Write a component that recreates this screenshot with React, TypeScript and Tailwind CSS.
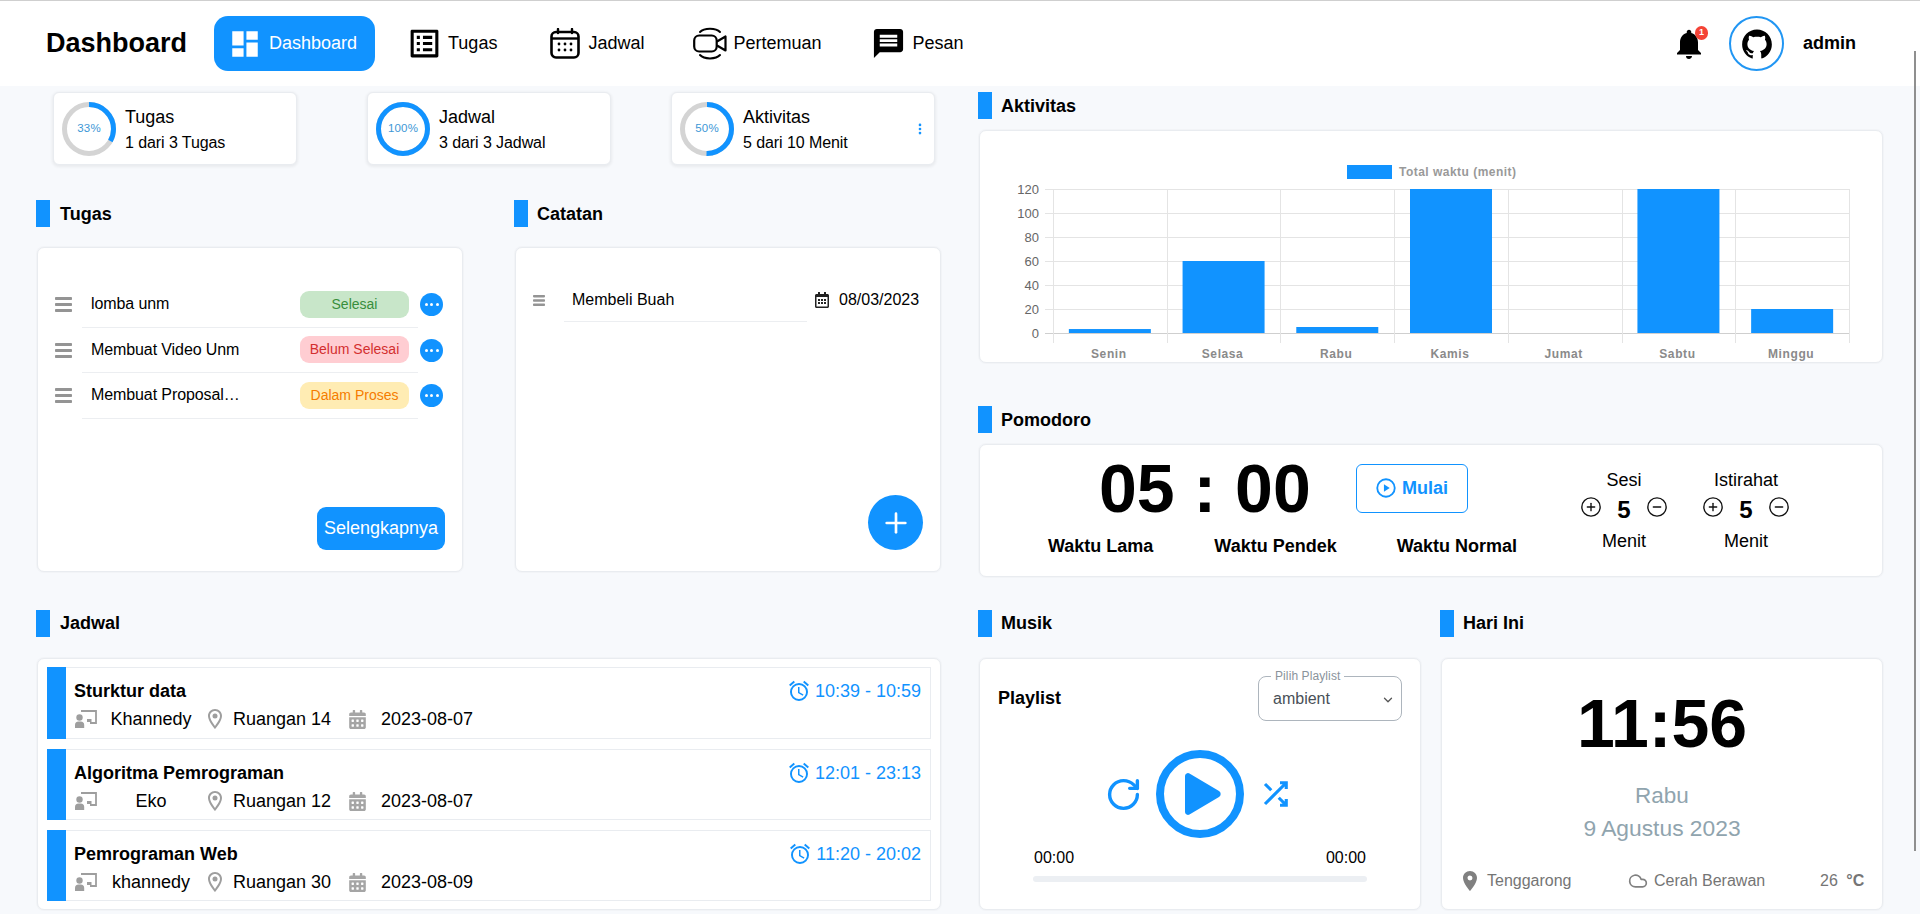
import React from "react";
import { MdDashboard, MdListAlt, MdMessage, MdNotifications, MdOutlineAlarm, MdOutlineLocationOn, MdLocationOn } from "react-icons/md";
import { AiOutlineGithub } from "react-icons/ai";
import { FaCalendarAlt, FaRegCalendarAlt } from "react-icons/fa";
import { CirclePlus, CircleMinus, RotateCw, Plus, EllipsisVertical, Cloud, ChevronDown } from "lucide-react";

const BLUE = "#1193ff";
const CARD = "bg-white rounded-[7px] border border-[#e9ecf0] shadow-[0_0_0_1px_#f2f4f7]";

function Section({ title, className = "", titleClass = "ml-[9px]", children }: { title: string; className?: string; titleClass?: string; children?: React.ReactNode }) {
  return (
    <div className={className}>
      <div className="flex items-center h-[27px]">
        <div className="w-[14px] h-[27px] bg-[#1193ff]" />
        <div className={`text-[18px] font-bold text-black ${titleClass}`}>{title}</div>
      </div>
      {children}
    </div>
  );
}

function Ring({ pct }: { pct: number }) {
  const r = 24.5;
  const c = 2 * Math.PI * r;
  return (
    <div className="relative w-[54px] h-[54px] shrink-0">
      <svg width="54" height="54" viewBox="0 0 54 54">
        <circle cx="27" cy="27" r={r} fill="none" stroke="#d4d4d4" strokeWidth="5" />
        <circle cx="27" cy="27" r={r} fill="none" stroke={BLUE} strokeWidth="5" strokeDasharray={`${(c * pct) / 100} ${c}`} transform="rotate(-90 27 27)" />
      </svg>
      <div className="absolute inset-0 flex items-center justify-center text-[11.5px] tracking-[0.2px] text-[#3d97d6]">{pct}%</div>
    </div>
  );
}

function Stat({ pct, title, sub, className, more }: { pct: number; title: string; sub: string; className: string; more?: boolean }) {
  return (
    <div className={`flex items-center h-[73px] bg-white rounded-[6px] border border-[#e9ecf0] shadow-[0_1px_3px_1px_rgba(0,0,0,0.06)] pl-[8px] ${className}`}>
      <Ring pct={pct} />
      <div className="ml-[9px] flex flex-col gap-[4px] mt-[3px] text-black">
        <div className="text-[18px] leading-[22px]">{title}</div>
        <div className="text-[16px] leading-[22px] tracking-[-0.08px]">{sub}</div>
      </div>
      {more && <EllipsisVertical size={14} strokeWidth={2.6} color={BLUE} className="ml-auto mr-[7px]" />}
    </div>
  );
}

function Burger({ w, h, bar }: { w: number; h: number; bar: number }) {
  const gap = (h - bar) / 2;
  return (
    <svg width={w} height={h} viewBox={`0 0 ${w} ${h}`} className="shrink-0">
      {[0, 1, 2].map((i) => (
        <rect key={i} x="0" y={i * gap} width={w} height={bar} rx="0.8" fill="#949494" />
      ))}
    </svg>
  );
}

function Dots() {
  return (
    <div className="w-[23px] h-[23px] rounded-full bg-[#1193ff] flex items-center justify-center gap-[2.5px] shrink-0">
      <span className="w-[3px] h-[3px] rounded-full bg-white" />
      <span className="w-[3px] h-[3px] rounded-full bg-white" />
      <span className="w-[3px] h-[3px] rounded-full bg-white" />
    </div>
  );
}

const tasks = [
  { name: "lomba unm", status: "Selesai", cls: "bg-[#c8e6c9] text-[#388e3c]" },
  { name: "Membuat Video Unm", status: "Belum Selesai", cls: "bg-[#ffcdd2] text-[#d32f2f]" },
  { name: "Membuat Proposal Skripsi", status: "Dalam Proses", cls: "bg-[#ffecb3] text-[#f57c00]" },
];

function TaskRow({ t }: { t: (typeof tasks)[number] }) {
  return (
    <div className="flex items-center h-[45.5px] pl-[17px]">
      <Burger w={17} h={15} bar={3} />
      <div className="ml-[10px] w-[336px] h-full flex items-center border-b border-[#eceef1] pl-[9px]">
        <div className="w-[152px] truncate text-[16px] tracking-[-0.1px] text-black">{t.name}</div>
        <div className={`ml-auto mr-[9px] w-[109px] h-[27px] rounded-[9px] flex items-center justify-center text-[14px] ${t.cls}`}>{t.status}</div>
      </div>
      <div className="ml-[2px]">
        <Dots />
      </div>
    </div>
  );
}

function Chart() {
  const L = 73, R = 869, T = 59, B = 203;
  const cw = (R - L) / 7;
  const days = ["Senin", "Selasa", "Rabu", "Kamis", "Jumat", "Sabtu", "Minggu"];
  const vals = [3.3, 60, 5, 120, 0, 120, 20];
  const ticks = [120, 100, 80, 60, 40, 20, 0];
  const u = (B - T) / 120;
  return (
    <svg width="903" height="231" viewBox="0 0 903 231" className="block text-[12px]">
      <rect x="367" y="34" width="45" height="14" fill={BLUE} />
      <text x="419" y="45" textLength={117} lengthAdjust="spacing" className="font-bold fill-[#999]">Total waktu (menit)</text>
      {ticks.map((t, i) => (
        <g key={t}>
          <line x1={65} x2={R} y1={T + i * 24 - 0.5} y2={T + i * 24 - 0.5} stroke={t === 0 ? "#cfcfcf" : "#e4e4e4"} />
          <text x="59" y={T + i * 24 + 4} textAnchor="end" className="text-[13px] fill-[#666]">{t}</text>
        </g>
      ))}
      {Array.from({ length: 8 }).map((_, i) => (
        <line key={i} x1={Math.round(L + i * cw) + 0.5} x2={Math.round(L + i * cw) + 0.5} y1={T - 1} y2={B + 9} stroke="#e4e4e4" />
      ))}
      {vals.map((v, i) =>
        v > 0 ? <rect key={i} x={L + i * cw + (cw - 82) / 2} y={B - 1 - v * u} width="82" height={v * u} fill={BLUE} /> : null
      )}
      {days.map((d, i) => (
        <text key={d} x={L + i * cw + cw / 2 - 1} y="227" textAnchor="middle" className="font-bold tracking-[0.6px] fill-[#8a8a8a]">{d}</text>
      ))}
    </svg>
  );
}

function Stepper({ label }: { label: string }) {
  return (
    <div className="w-[100px] flex flex-col items-center pt-[25px] text-[18px] text-black">
      <div className="leading-[20px]">{label}</div>
      <div className="flex items-center justify-between w-[88px] h-[33px]">
        <CirclePlus size={22} strokeWidth={1.5} color="#111" />
        <span className="text-[24px] leading-[24px] font-bold mt-[6px]">5</span>
        <CircleMinus size={22} strokeWidth={1.5} color="#111" />
      </div>
      <div className="leading-[20px] mt-[8px]">Menit</div>
    </div>
  );
}

const schedule = [
  { title: "Sturktur data", time: "10:39 - 10:59", who: "Khannedy", room: "Ruangan 14", date: "2023-08-07", h: "h-[72px]" },
  { title: "Algoritma Pemrograman", time: "12:01 - 23:13", who: "Eko", room: "Ruangan 12", date: "2023-08-07", h: "h-[71px]" },
  { title: "Pemrograman Web", time: "11:20 - 20:02", who: "khannedy", room: "Ruangan 30", date: "2023-08-09", h: "h-[71px]" },
];

function JadwalIcon() {
  return (
    <svg width="30" height="31" viewBox="0 0 30 31" fill="none" className="shrink-0">
      <rect x="1.5" y="4" width="27" height="25.5" rx="4.5" stroke="#000" strokeWidth="2.6" />
      <path d="M2 10.5h26" stroke="#000" strokeWidth="2.4" />
      <path d="M8 1v4M22 1v4" stroke="#000" strokeWidth="2.4" strokeLinecap="round" />
      {[9, 15, 21].map((x) => [16, 22].map((y) => <circle key={`${x}-${y}`} cx={x} cy={y} r="1.4" fill="#000" />))}
    </svg>
  );
}

function MeetIcon() {
  return (
    <svg width="34" height="33" viewBox="0 0 34 33" fill="none" className="shrink-0">
      <rect x="1.2" y="8.5" width="22.5" height="16" rx="5" stroke="#000" strokeWidth="2.2" />
      <path d="M24 14.5l8.5-5v14l-8.5-5" stroke="#000" strokeWidth="2.2" strokeLinejoin="round" />
      <path d="M7 5C11 0.5 23 0.5 27 5M7 28C11 32.5 23 32.5 27 28" stroke="#000" strokeWidth="2" strokeLinecap="round" />
    </svg>
  );
}

function TeacherIcon() {
  return (
    <svg width="22" height="18" viewBox="0 0 22 18" className="shrink-0 ml-[1px]">
      <path d="M6 1H21V13H15" fill="none" stroke="#9e9e9e" strokeWidth="1.8" />
      <circle cx="4.5" cy="7.5" r="3.2" fill="#9e9e9e" />
      <path d="M0 18v-3a3.6 3.6 0 0 1 3.6-3.6h2a3.6 3.6 0 0 1 3.6 3.6v3z" fill="#9e9e9e" />
      <rect x="12" y="9" width="4.5" height="3" fill="#9e9e9e" />
    </svg>
  );
}

function PlayIcon() {
  return (
    <svg width="20" height="20" viewBox="0 0 24 24" className="mr-[6px]">
      <circle cx="12" cy="12" r="10.5" fill="none" stroke={BLUE} strokeWidth="2.2" />
      <path d="M9.5 7.5l7 4.5-7 4.5z" fill={BLUE} />
    </svg>
  );
}

function ShuffleIcon() {
  return (
    <svg width="30" height="30" viewBox="0 0 24 24" fill="none" stroke={BLUE} strokeWidth="2.5" className="ml-[16px] mr-[5px]">
      <path d="M16 3h5v5M4 20L21 3M21 16v5h-5M15 15l6 6M4 4l5 5" />
    </svg>
  );
}

export default function App() {
  return (
    <div className="relative w-[1920px] h-[914px] overflow-hidden bg-[#f7f9fc] font-['Liberation_Sans',Arial,sans-serif] text-black">
      <header className="h-[86px] bg-white border-t border-[#cfcfcf] flex items-center">
        <div className="ml-[46px] text-[27px] font-bold">Dashboard</div>
        <div className="ml-[27px] w-[161px] h-[55px] rounded-[14px] bg-[#1193ff] flex items-center pl-[14px] text-white text-[18px]">
          <MdDashboard size={34} />
          <span className="ml-[7px]">Dashboard</span>
        </div>
        <div className="ml-[31px] flex items-center text-[18px]">
          <MdListAlt size={37} />
          <span className="ml-[5px]">Tugas</span>
        </div>
        <div className="ml-[53px] flex items-center text-[18px]">
          <JadwalIcon />
          <span className="ml-[8px]">Jadwal</span>
        </div>
        <div className="ml-[49px] flex items-center text-[18px]">
          <MeetIcon />
          <span className="ml-[6px]">Pertemuan</span>
        </div>
        <div className="ml-[50px] flex items-center text-[18px]">
          <MdMessage size={35} />
          <span className="ml-[6px]">Pesan</span>
        </div>
        <div className="ml-auto relative">
          <MdNotifications size={36} />
          <div className="absolute top-0 right-[-1px] w-[13px] h-[14px] rounded-full bg-[#f44336] text-white text-[9px] font-bold flex items-center justify-center">1</div>
        </div>
        <div className="ml-[22px] w-[55px] h-[55px] rounded-full border-2 border-[#2196f3] flex items-center justify-center">
          <AiOutlineGithub size={34} />
        </div>
        <div className="ml-[19px] mr-[64px] text-[18px] font-bold w-[53px]">admin</div>
      </header>

      <main className="flex">
        <div className="ml-[36px] w-[905px]">
          <div className="flex mt-[6px] ml-[17px]">
            <Stat pct={33} title="Tugas" sub="1 dari 3 Tugas" className="w-[244px]" />
            <Stat pct={100} title="Jadwal" sub="3 dari 3 Jadwal" className="w-[244px] ml-[70px]" />
            <Stat pct={50} title="Aktivitas" sub="5 dari 10 Menit" className="w-[264px] ml-[60px]" more />
          </div>

          <div className="flex mt-[35px]">
            <Section title="Tugas" className="w-[427px]" titleClass="ml-[10px] mt-[2px]">
              <div className={`mt-[20px] ml-[1px] h-[325px] flex flex-col ${CARD}`}>
                <div className="mt-[34px]">
                  {tasks.map((t) => (
                    <TaskRow key={t.name} t={t} />
                  ))}
                </div>
                <div className="mt-auto self-end mr-[17px] mb-[21px] w-[128px] h-[43px] rounded-[9px] bg-[#1193ff] text-white text-[18px] flex items-center justify-center">Selengkapnya</div>
              </div>
            </Section>
            <Section title="Catatan" className="w-[427px] ml-[51px]" titleClass="ml-[9px] mt-[2px]">
              <div className={`mt-[20px] ml-[1px] h-[325px] flex flex-col ${CARD}`}>
                <div className="mt-[30px] h-[44px] flex items-center pl-[17px]">
                  <Burger w={12} h={11} bar={2.4} />
                  <div className="ml-[19px] w-[243px] h-full border-b border-[#eceef1] flex items-center pl-[8px] text-[16px]">Membeli Buah</div>
                  <FaRegCalendarAlt size={16} color="#222" className="ml-[7px]" />
                  <span className="ml-[9px] text-[16px]">08/03/2023</span>
                </div>
                <div className="mt-auto self-end mr-[17px] mb-[21px] w-[55px] h-[55px] rounded-full bg-[#1193ff] flex items-center justify-center">
                  <Plus size={32} color="#fff" strokeWidth={2} />
                </div>
              </div>
            </Section>
          </div>

          <Section title="Jadwal" className="mt-[38px]" titleClass="ml-[10px]">
            <div className={`mt-[21px] ml-[1px] h-[252px] px-[9px] pt-[8px] flex flex-col gap-[10px] ${CARD}`}>
              {schedule.map((s) => (
                <div key={s.title} className={`${s.h} flex border border-[#e9ecf0]`}>
                  <div className="w-[19px] -ml-px -my-px bg-[#1193ff] shrink-0" />
                  <div className="flex-1 pl-[8px] pr-[9px] pt-[13px]">
                    <div className="flex items-center justify-between h-[20px]">
                      <div className="text-[18px] font-bold">{s.title}</div>
                      <div className="flex items-center text-[18px] text-[#1193ff]">
                        <MdOutlineAlarm size={24} className="mr-[4px]" />
                        {s.time}
                      </div>
                    </div>
                    <div className="flex items-center h-[20px] mt-[8px] text-[18px] whitespace-nowrap">
                      <TeacherIcon />
                      <div className="ml-[13px] w-[82px] text-center">{s.who}</div>
                      <MdOutlineLocationOn size={24} color="#9e9e9e" className="ml-[11px]" />
                      <div className="ml-[6px] w-[98px]">{s.room}</div>
                      <FaCalendarAlt size={19} color="#a5a5a5" className="ml-[17px]" />
                      <div className="ml-[14px]">{s.date}</div>
                    </div>
                  </div>
                </div>
              ))}
            </div>
          </Section>
        </div>

        <div className="ml-[37px] w-[905px]">
          <Section title="Aktivitas" className="mt-[6px]" titleClass="ml-[9px] mt-[1px]">
            <div className={`mt-[11px] ml-[1px] h-[233px] ${CARD}`}>
              <Chart />
            </div>
          </Section>

          <Section title="Pomodoro" className="mt-[43px]" titleClass="ml-[9px] mt-[2px]">
            <div className={`mt-[11px] ml-[1px] h-[133px] flex ${CARD}`}>
              <div className="w-[594px] pt-[8px]">
                <div className="flex items-center ml-[119px] h-[70px]">
                  <div className="w-[257px] text-[68px] leading-[70px] font-bold">05 : 00</div>
                  <div className="w-[112px] h-[49px] border-[1.5px] border-[#1193ff] rounded-[6px] flex items-center justify-center text-[#1193ff] text-[18px] font-bold">
                    <PlayIcon />
                    Mulai
                  </div>
                </div>
                <div className="flex mt-[13px] ml-[68px] text-[18px] leading-[20px] font-bold">
                  <span>Waktu Lama</span>
                  <span className="ml-[61px]">Waktu Pendek</span>
                  <span className="ml-[60px]">Waktu Normal</span>
                </div>
              </div>
              <Stepper label="Sesi" />
              <div className="ml-[22px]">
                <Stepper label="Istirahat" />
              </div>
            </div>
          </Section>

          <div className="flex mt-[33px]">
            <Section title="Musik" className="w-[443px]">
              <div className={`mt-[21px] ml-[1px] h-[252px] ${CARD}`}>
                <div className="flex items-center justify-between pt-[17px] px-[18px]">
                  <div className="text-[18px] font-bold">Playlist</div>
                  <div className="relative w-[144px] h-[45px] border border-[#adb5bd] rounded-[8px]">
                    <div className="absolute -top-[8px] left-[12px] px-[4px] bg-white text-[12px] leading-[14px] tracking-[0.1px] text-[#8a939b]">Pilih Playlist</div>
                    <select defaultValue="ambient" className="w-full h-full pl-[14px] pr-[24px] appearance-none bg-transparent border-none outline-none text-[16px] text-[#495057]">
                      <option value="ambient">ambient</option>
                    </select>
                    <ChevronDown size={14} strokeWidth={2.2} color="#555" className="absolute right-[6px] top-[16px]" />
                  </div>
                </div>
                <div className="mt-[29px] flex items-center justify-center h-[88px]">
                  <RotateCw size={37} color={BLUE} strokeWidth={2.2} />
                  <svg width="88" height="88" viewBox="0 0 88 88" className="ml-[14.5px]">
                    <circle cx="44" cy="44" r="40" fill="none" stroke={BLUE} strokeWidth="8" />
                    <path d="M29 26 a3 3 0 0 1 4.5-2.5 L63 41 a3.5 3.5 0 0 1 0 6 L33.5 64.5 A3 3 0 0 1 29 62 Z" fill={BLUE} />
                  </svg>
                  <ShuffleIcon />
                </div>
                <div className="mt-[11px] mx-[54px] flex justify-between text-[16px] leading-[18px]">
                  <span>00:00</span>
                  <span>00:00</span>
                </div>
                <div className="mt-[9px] mx-[53px] h-[6px] rounded-full bg-[#eceff3]" />
              </div>
            </Section>

            <Section title="Hari Ini" className="ml-[19px] w-[443px]">
              <div className={`mt-[21px] ml-[1px] h-[252px] flex flex-col items-center pt-[29px] ${CARD}`}>
                <div className="text-[68px] leading-[70px] font-bold">11:56</div>
                <div className="mt-[22px] text-[22.5px] leading-[32px] text-[#90a4ae]">Rabu</div>
                <div className="text-[22.8px] leading-[32px] text-[#90a4ae]">9 Agustus 2023</div>
                <div className="mt-[27px] w-full flex items-center h-[20px] pl-[16px] text-[16px] text-[#757575]">
                  <div className="w-[170px] flex items-center">
                    <MdLocationOn size={24} color="#808080" />
                    <span className="ml-[5px]">Tenggarong</span>
                  </div>
                  <div className="w-[192px] flex items-center">
                    <Cloud size={20} strokeWidth={2} color="#808080" />
                    <span className="ml-[6px]">Cerah Berawan</span>
                  </div>
                  <div>
                    26 <span className="ml-[4px] font-bold">°C</span>
                  </div>
                </div>
              </div>
            </Section>
          </div>
        </div>
      </main>

      <div className="absolute left-[1914px] top-[51px] w-[2px] h-[800px] bg-[#8f8f8f]" />
    </div>
  );
}
